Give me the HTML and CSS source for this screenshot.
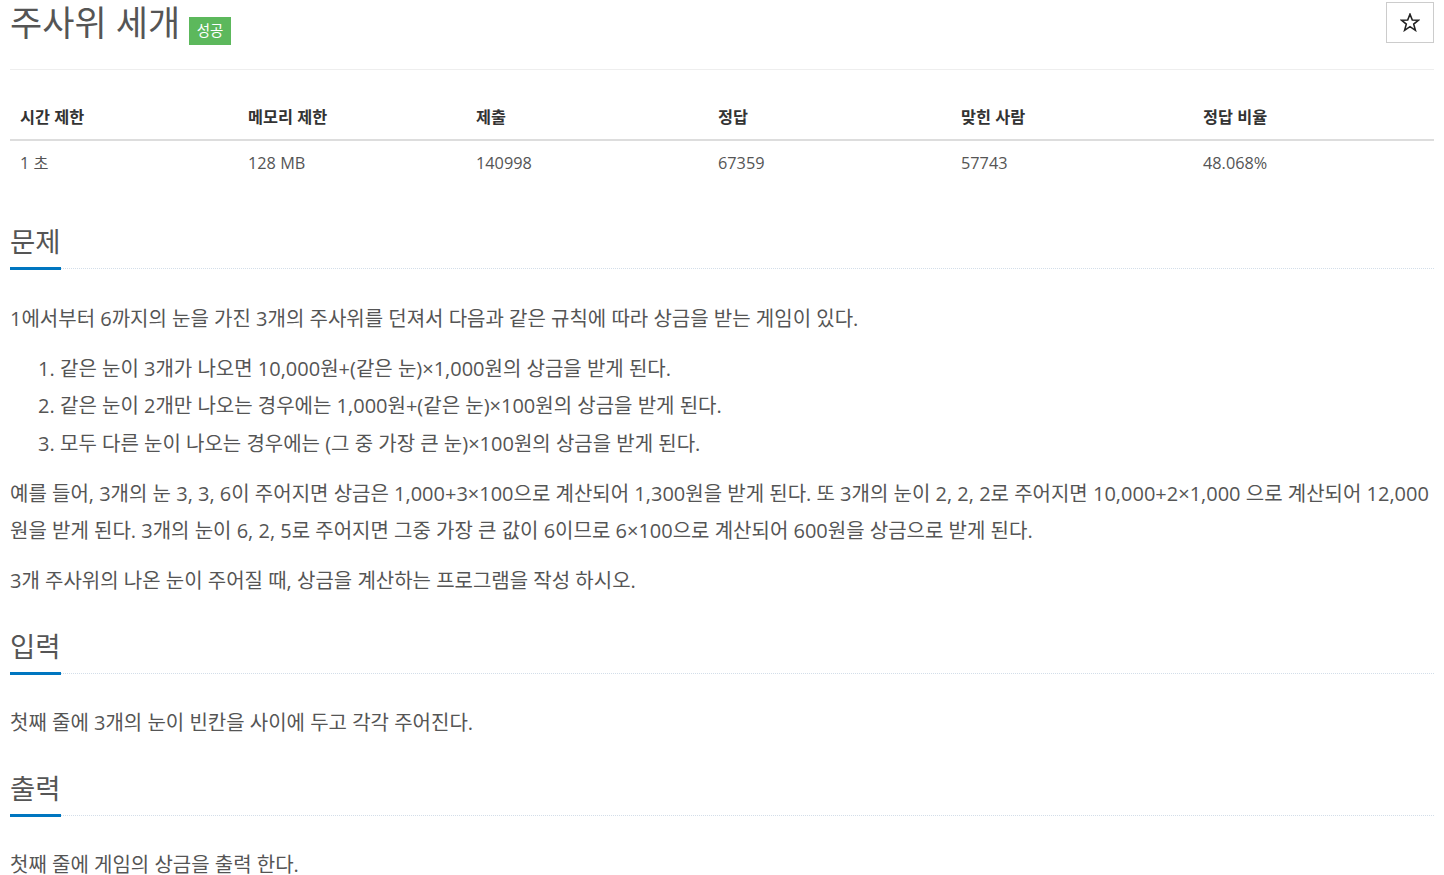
FILE: index.html
```html
<!DOCTYPE html>
<html lang="ko">
<head>
<meta charset="utf-8">
<title>주사위 세개</title>
<link rel="stylesheet" href="styles.css">
</head>
<body>
<div class="page">
  <div class="title-row">
    <h1 class="title">주사위 세개<span class="badge">성공</span></h1>
    <button class="star" type="button" aria-label="즐겨찾기">
      <svg width="20" height="19" viewBox="0 0 20 19"><path d="M10 1.2 L12.3 7 L18.6 7.2 L13.7 11.1 L15.4 17.3 L10 13.7 L4.6 17.3 L6.3 11.1 L1.4 7.2 L7.7 7 Z" fill="none" stroke="#222" stroke-width="1.6" stroke-linejoin="miter"/></svg>
    </button>
  </div>

  <table class="info">
    <colgroup>
      <col class="c1"><col class="c2"><col class="c3"><col class="c4"><col class="c5"><col class="c6">
    </colgroup>
    <thead>
      <tr><th>시간 제한</th><th>메모리 제한</th><th>제출</th><th>정답</th><th>맞힌 사람</th><th>정답 비율</th></tr>
    </thead>
    <tbody>
      <tr><td>1 초</td><td>128 MB</td><td>140998</td><td>67359</td><td>57743</td><td>48.068%</td></tr>
    </tbody>
  </table>

  <section class="sec">
    <h2 class="headline"><span>문제</span></h2>
    <div class="text">
      <p>1에서부터 6까지의 눈을 가진 3개의 주사위를 던져서 다음과 같은 규칙에 따라 상금을 받는 게임이 있다.</p>
      <ol>
        <li>같은 눈이 3개가 나오면 10,000원+(같은 눈)×1,000원의 상금을 받게 된다.</li>
        <li>같은 눈이 2개만 나오는 경우에는 1,000원+(같은 눈)×100원의 상금을 받게 된다.</li>
        <li>모두 다른 눈이 나오는 경우에는 (그 중 가장 큰 눈)×100원의 상금을 받게 된다.</li>
      </ol>
      <p>예를 들어, 3개의 눈 3, 3, 6이 주어지면 상금은 1,000+3×100으로 계산되어 1,300원을 받게 된다. 또 3개의 눈이 2, 2, 2로 주어지면 10,000+2×1,000 으로 계산되어 12,000원을 받게 된다. 3개의 눈이 6, 2, 5로 주어지면 그중 가장 큰 값이 6이므로 6×100으로 계산되어 600원을 상금으로 받게 된다.</p>
      <p>3개 주사위의 나온 눈이 주어질 때, 상금을 계산하는 프로그램을 작성 하시오.</p>
    </div>
  </section>

  <section class="sec">
    <h2 class="headline"><span>입력</span></h2>
    <div class="text">
      <p>첫째 줄에 3개의 눈이 빈칸을 사이에 두고 각각 주어진다.</p>
    </div>
  </section>

  <section class="sec">
    <h2 class="headline"><span>출력</span></h2>
    <div class="text">
      <p>첫째 줄에 게임의 상금을 출력 한다.</p>
    </div>
  </section>
</div>
</body>
</html>
```

FILE: styles.css
```css
html, body {
  margin: 0;
  padding: 0;
  background: #fff;
}
body {
  font-family: "Open Sans", "Noto Sans CJK KR", sans-serif;
  color: #333;
}
.page {
  padding: 0 10px;
}
.title-row {
  display: flex;
  justify-content: space-between;
  align-items: flex-start;
  height: 69px;
  border-bottom: 1px solid #eee;
}
.title {
  margin: 0;
  font-size: 35px;
  line-height: 46px;
  font-weight: 400;
  color: #555;
  display: flex;
  align-items: flex-start;
}
.badge {
  display: inline-block;
  margin-left: 9px;
  margin-top: 17px;
  width: 42px;
  height: 28px;
  line-height: 28px;
  background: #5cb85c;
  color: #fff;
  font-size: 14.5px;
  text-align: center;
}
.star {
  margin-top: 2px;
  width: 48px;
  height: 41px;
  border: 1px solid #ccc;
  background: #fff;
  padding: 0;
  display: flex;
  align-items: center;
  justify-content: center;
}
.star svg {
  display: block;
  margin-top: -1px;
}
.info {
  width: 100%;
  border-collapse: collapse;
  margin-top: 25px;
  margin-bottom: 41px;
  font-size: 16.3px;
}
.info .c1, .info .c2 { width: 228px; }
.info .c3 { width: 242px; }
.info .c4 { width: 243px; }
.info .c5 { width: 242px; }
.info th, .info td {
  text-align: left;
  padding: 10px;
  line-height: 24px;
}
.info th {
  font-weight: 700;
  color: #333;
  border-bottom: 2px solid #ddd;
}
.info td {
  color: #555;
}
.sec {
  margin-top: 31px;
}
.headline {
  margin: 0 0 30.5px;
  font-size: 27.5px;
  line-height: 32px;
  font-weight: 400;
  color: #555;
  border-bottom: 1px dotted #d3dee9;
}
.headline span {
  display: inline-block;
  padding-bottom: 9px;
  border-bottom: 3px solid #0076c0;
  margin-bottom: -2px;
}
.text {
  font-size: 20px;
  line-height: 37.5px;
  color: #555;
}
.text p {
  margin: 0 0 12.5px;
}
.text ol {
  margin: 0 0 12.5px;
  padding-left: 50px;
}
```
